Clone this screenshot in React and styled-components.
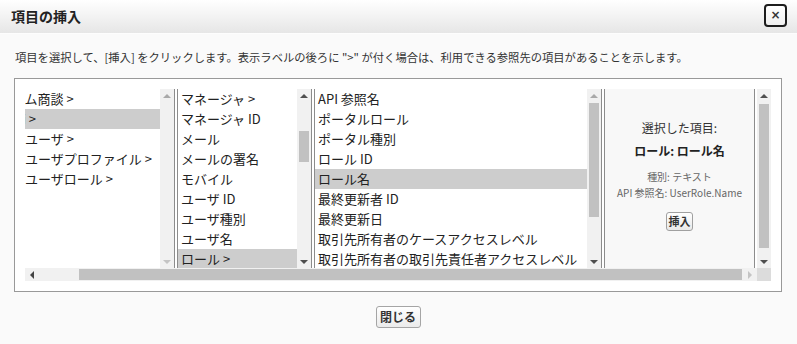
import React, { useLayoutEffect, useRef } from "react";
import styled, { createGlobalStyle } from "styled-components";

const Global = createGlobalStyle`
  html, body { margin: 0; padding: 0; }
  body {
    font-family: "Noto Sans CJK JP", "Noto Sans", sans-serif;
    color: #222;
    background: #fafafa;
  }
  * { box-sizing: border-box; }
`;

const Dialog = styled.div`
  width: 797px;
  height: 344px;
  display: flex;
  flex-direction: column;
  background: linear-gradient(#f1f1f1 0, #fafafa 22px, #fafafa 100%);
`;

const Header = styled.div`
  height: 34px;
  flex: none;
  display: flex;
  align-items: flex-start;
  justify-content: space-between;
  padding: 0 10px 0 11px;
  background: linear-gradient(#ffffff, #e6e6e6);
  border-bottom: 1px solid #fdfdfd;
`;

const Title = styled.h2`
  margin: 0;
  font-size: 14px;
  font-weight: bold;
  line-height: 33px;
  color: #222;
`;

const CloseX = styled.button`
  margin-top: 4px;
  width: 23px;
  height: 23px;
  padding: 0;
  border: 2px solid #1d1d1d;
  border-radius: 4px;
  background: linear-gradient(#ffffff, #f0f0f0);
  font-family: "DejaVu Sans", sans-serif;
  font-size: 12px;
  font-weight: bold;
  color: #333;
  line-height: 19px;
`;

const Body = styled.div`
  padding: 15px 15px 0 14px;
  display: flex;
  flex-direction: column;
`;

const Instruction = styled.p`
  margin: 0 0 13px 1px;
  font-size: 11.3px;
  line-height: 16px;
  color: #333;
  white-space: nowrap;
`;

const Frame = styled.div`
  border: 1px solid #999;
  background: #fff;
  padding: 10px;
`;

const Scroller = styled.div`
  display: grid;
  grid-template-columns: 732px 14px;
  grid-template-rows: 179px 13px;
`;

const Viewport = styled.div`
  overflow: hidden;
`;

const Columns = styled.div`
  display: flex;
  gap: 2px;
  height: 179px;
  width: max-content;
  padding-right: 4px;
`;

const Column = styled.div`
  flex: none;
  width: ${(p) => p.$w}px;
  display: flex;
  border-left: 1px solid #8c8c8c;
  border-right: 1px solid #8c8c8c;
  background: #fff;
`;

const List = styled.div`
  flex: 1;
  min-width: 0;
  overflow: hidden;
`;

const Item = styled.div`
  height: 20px;
  line-height: 20px;
  padding-left: 3px;
  font-size: 13px;
  white-space: nowrap;
  color: #222;
  background: ${(p) => (p.$selected ? "#cdcdcd" : "transparent")};
`;

const VBar = styled.div`
  flex: none;
  width: 14px;
  background: #f1f1f1;
  display: flex;
  flex-direction: column;
  align-items: center;
`;

const VArrow = styled.div`
  flex: none;
  width: 14px;
  height: 13px;
  display: flex;
  align-items: center;
  justify-content: center;
  &::after {
    content: "";
    width: 0;
    height: 0;
    border-left: 4px solid transparent;
    border-right: 4px solid transparent;
    ${(p) => (p.$dir === "up" ? "border-bottom" : "border-top")}: 4px solid ${(p) => p.$color};
  }
`;

const VThumb = styled.div`
  flex: none;
  width: 10px;
  margin-top: ${(p) => p.$top}px;
  height: ${(p) => p.$size}px;
  background: #c1c1c1;
`;

const Spacer = styled.div`
  flex: 1;
`;

const HBar = styled.div`
  display: flex;
  align-items: center;
  background: #f1f1f1;
`;

const HArrow = styled.div`
  flex: none;
  width: 14px;
  height: 13px;
  display: flex;
  align-items: center;
  justify-content: center;
  &::after {
    content: "";
    width: 0;
    height: 0;
    border-top: 4px solid transparent;
    border-bottom: 4px solid transparent;
    ${(p) => (p.$dir === "left" ? "border-right" : "border-left")}: 4px solid ${(p) => p.$color};
  }
`;

const HThumb = styled.div`
  flex: none;
  height: 11px;
  margin-left: ${(p) => p.$left}px;
  width: ${(p) => p.$size}px;
  background: #c1c1c1;
`;

const Corner = styled.div`
  background: #dcdcdc;
`;

const Panel = styled.div`
  flex: none;
  width: 151px;
  border-left: 1px solid #8c8c8c;
  border-right: 1px solid #8c8c8c;
  background: #f8f8f8;
  display: flex;
  flex-direction: column;
  align-items: center;
  padding-top: 31px;
  text-align: center;
`;

const PanelLabel = styled.div`
  font-size: 12px;
  line-height: 16px;
  color: #333;
`;

const PanelName = styled.div`
  margin-top: 7px;
  font-size: 12px;
  font-weight: bold;
  line-height: 16px;
  color: #222;
`;

const PanelMeta = styled.div`
  font-size: 10px;
  line-height: 16px;
  color: #666;
  white-space: nowrap;
  margin-top: ${(p) => p.$gap || 0}px;
`;

const SmallButton = styled.button`
  margin-top: 11px;
  width: 27px;
  height: 19px;
  padding: 0;
  border: 1px solid #a0a0a0;
  border-radius: 3px;
  background: linear-gradient(#ffffff, #e9e9e9);
  font-family: "Noto Sans CJK JP", sans-serif;
  font-size: 11px;
  font-weight: bold;
  color: #333;
  line-height: 17px;
`;

const Footer = styled.div`
  display: flex;
  justify-content: center;
  margin-top: 14px;
`;

const Button = styled.button`
  height: 22px;
  width: 45px;
  padding: 0;
  border: 1px solid #a5a5a5;
  border-radius: 3px;
  background: linear-gradient(#ffffff, #ebebeb);
  font-family: "Noto Sans CJK JP", sans-serif;
  font-size: 12px;
  font-weight: bold;
  color: #333;
  line-height: 20px;
`;

const DARK = "#4f4f4f";
const DIM = "#a9a9a9";
const FAINT = "#c4c4c4";

function ScrollBar({ up, down, top, size }) {
  return (
    <VBar>
      <VArrow $dir="up" $color={up} />
      {size ? <VThumb $top={top} $size={size} /> : null}
      <Spacer />
      <VArrow $dir="down" $color={down} />
    </VBar>
  );
}

function ListColumn({ width, items, selected, bar }) {
  return (
    <Column $w={width}>
      <List>
        {items.map((t, i) => (
          <Item key={i} $selected={i === selected}>
            {t}
          </Item>
        ))}
      </List>
      <ScrollBar {...bar} />
    </Column>
  );
}

const col1 = ["チーム商談 >", "$Api >", "所有ユーザ >", "所有ユーザプロファイル >", "所有ユーザロール >"];
const col2 = [
  "マネージャ >",
  "マネージャ ID",
  "メール",
  "メールの署名",
  "モバイル",
  "ユーザ ID",
  "ユーザ種別",
  "ユーザ名",
  "ロール >",
];
const col3 = [
  "API 参照名",
  "ポータルロール",
  "ポータル種別",
  "ロール ID",
  "ロール名",
  "最終更新者 ID",
  "最終更新日",
  "取引先所有者のケースアクセスレベル",
  "取引先所有者の取引先責任者アクセスレベル",
];

export default function App() {
  const viewRef = useRef(null);
  useLayoutEffect(() => {
    if (viewRef.current) viewRef.current.scrollLeft = 30;
  }, []);

  return (
    <>
      <Global />
      <Dialog>
        <Header>
          <Title>項目の挿入</Title>
          <CloseX aria-label="閉じる">×</CloseX>
        </Header>
        <Body>
          <Instruction>
            項目を選択して、[挿入] をクリックします。表示ラベルの後ろに "&gt;" が付く場合は、利用できる参照先の項目があることを示します。
          </Instruction>
          <Frame>
            <Scroller>
              <Viewport ref={viewRef}>
                <Columns>
                  <ListColumn width={180} items={col1} selected={1} bar={{ up: DIM, down: FAINT }} />
                  <ListColumn width={135} items={col2} selected={8} bar={{ up: DARK, down: DARK, top: 29, size: 31 }} />
                  <ListColumn width={288} items={col3} selected={4} bar={{ up: DIM, down: DARK, top: 1, size: 114 }} />
                  <Panel>
                    <PanelLabel>選択した項目:</PanelLabel>
                    <PanelName>ロール: ロール名</PanelName>
                    <PanelMeta $gap={10}>種別: テキスト</PanelMeta>
                    <PanelMeta>API 参照名: UserRole.Name</PanelMeta>
                    <SmallButton>挿入</SmallButton>
                  </Panel>
                </Columns>
              </Viewport>
              <ScrollBar up={DARK} down={DARK} top={2} size={144} />
              <HBar>
                <HArrow $dir="left" $color="#444" />
                <HThumb $left={40} $size={663} />
                <Spacer />
                <HArrow $dir="right" $color={FAINT} />
              </HBar>
              <Corner />
            </Scroller>
          </Frame>
          <Footer>
            <Button>閉じる</Button>
          </Footer>
        </Body>
      </Dialog>
    </>
  );
}
